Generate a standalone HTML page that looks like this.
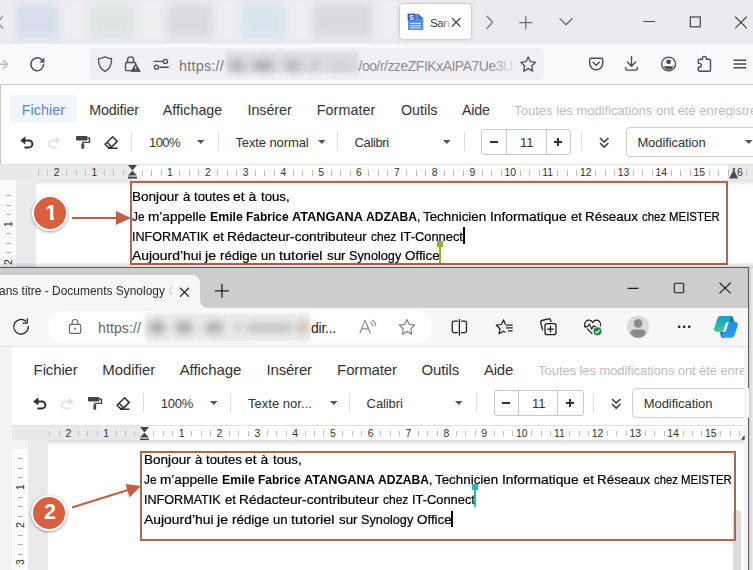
<!DOCTYPE html>
<html lang="fr"><head><meta charset="utf-8"><title>Documents Synology Office</title>
<style>
html,body{margin:0;padding:0}
body{width:753px;height:570px;overflow:hidden;position:relative;background:#fff;font-family:'Liberation Sans',sans-serif;}
svg{overflow:visible}
</style></head><body>
<div style="position:absolute;left:0px;top:0px;width:753px;height:44px;background:#eaeaef;"></div>
<div style="position:absolute;left:0px;top:0px;width:400px;height:42px;background:#eeeef1;filter:blur(4px);"></div>
<div style="position:absolute;left:15px;top:4px;width:44px;height:34px;background:#d5deea;filter:blur(4px);"></div>
<div style="position:absolute;left:90px;top:4px;width:44px;height:34px;background:#dde5e3;filter:blur(4px);"></div>
<div style="position:absolute;left:167px;top:4px;width:46px;height:34px;background:#dbdbdf;filter:blur(4px);"></div>
<div style="position:absolute;left:241px;top:4px;width:44px;height:34px;background:#d8e4ec;filter:blur(4px);"></div>
<div style="position:absolute;left:313px;top:4px;width:60px;height:34px;background:#dadade;filter:blur(4px);"></div>
<div style="position:absolute;left:396px;top:0px;width:357px;height:44px;background:#eaeaef;"></div>
<div style="position:absolute;left:400px;top:4px;width:71px;height:35px;background:#fff;border-radius:4px;box-shadow:0 0 3px rgba(0,0,0,.3);"></div>
<div style="position:absolute;left:430.00px;top:16.98px;font-size:11.6px;line-height:1;color:#333;white-space:pre;letter-spacing:-0.447px;">San</div>
<div style="position:absolute;left:440px;top:14px;width:10px;height:18px;background:linear-gradient(90deg,rgba(255,255,255,0),rgba(255,255,255,.75));"></div>
<div style="position:absolute;left:0px;top:44px;width:753px;height:40px;background:#f9f9fb;"></div>
<div style="position:absolute;left:0px;top:84px;width:753px;height:1px;background:#c9c9ce;"></div>
<div style="position:absolute;left:90px;top:48px;width:454px;height:32px;background:#f0f0f4;border-radius:4px;"></div>
<div style="position:absolute;left:179.00px;top:58.50px;font-size:14.3px;line-height:1;color:#747478;white-space:pre;letter-spacing:0.260px;">https://</div>
<div style="position:absolute;left:226px;top:51px;width:133px;height:22px;background:#e2e2e5;filter:blur(1.5px);"></div>
<div style="position:absolute;left:229px;top:59.5px;width:16px;height:11px;background:#adadb0;filter:blur(4px);border-radius:5px;"></div>
<div style="position:absolute;left:252px;top:59.5px;width:22px;height:11px;background:#acacaf;filter:blur(4px);border-radius:5px;"></div>
<div style="position:absolute;left:284px;top:59.5px;width:18px;height:11px;background:#b6b6b9;filter:blur(4px);border-radius:5px;"></div>
<div style="position:absolute;left:308px;top:59.5px;width:14px;height:11px;background:#c8c8cb;filter:blur(4px);border-radius:5px;"></div>
<div style="position:absolute;left:326px;top:59.5px;width:30px;height:11px;background:#d2d2d5;filter:blur(4px);border-radius:5px;"></div>
<div style="position:absolute;left:358.60px;top:58.75px;font-size:14px;line-height:1;color:#8e8e92;white-space:pre;letter-spacing:-0.499px;">/oo/r/zzeZFIKxAIPA7Ue3U</div>
<div style="position:absolute;left:490px;top:52px;width:28px;height:24px;background:linear-gradient(90deg,rgba(240,240,244,0),#f0f0f4);"></div>
<div style="position:absolute;left:0px;top:85px;width:753px;height:190px;background:#fff;"></div>
<div style="position:absolute;left:0px;top:85px;width:1px;height:80px;background:#c6c6c6;"></div>
<div style="position:absolute;left:10px;top:95px;width:66.5px;height:27.5px;background:#f2f5fa;border-radius:3px;"></div>
<div style="position:absolute;left:21.70px;top:102.60px;font-size:14.3px;line-height:1;color:#5a86c5;white-space:pre;letter-spacing:0.056px;">Fichier</div>
<div style="position:absolute;left:89.30px;top:102.60px;font-size:14.3px;line-height:1;color:#333;white-space:pre;letter-spacing:-0.170px;">Modifier</div>
<div style="position:absolute;left:162.80px;top:102.60px;font-size:14.3px;line-height:1;color:#333;white-space:pre;letter-spacing:0.016px;">Affichage</div>
<div style="position:absolute;left:247.50px;top:102.60px;font-size:14.3px;line-height:1;color:#333;white-space:pre;letter-spacing:-0.043px;">Insérer</div>
<div style="position:absolute;left:316.70px;top:102.60px;font-size:14.3px;line-height:1;color:#333;white-space:pre;letter-spacing:0.100px;">Formater</div>
<div style="position:absolute;left:401.00px;top:102.60px;font-size:14.3px;line-height:1;color:#333;white-space:pre;letter-spacing:-0.008px;">Outils</div>
<div style="position:absolute;left:462.00px;top:102.60px;font-size:14.3px;line-height:1;color:#333;white-space:pre;letter-spacing:-0.206px;">Aide</div>
<div style="position:absolute;left:514.20px;top:103.70px;font-size:13px;line-height:1;color:#bdbdbd;white-space:pre;letter-spacing:0.005px;width:239px;overflow:hidden;">Toutes les modifications ont été enregistrées</div>
<div style="position:absolute;left:130.5px;top:131.7px;width:1px;height:19.30000000000001px;background:#dcdcdc;"></div>
<div style="position:absolute;left:218.0px;top:131.7px;width:1px;height:19.30000000000001px;background:#dcdcdc;"></div>
<div style="position:absolute;left:336.5px;top:131.7px;width:1px;height:19.30000000000001px;background:#dcdcdc;"></div>
<div style="position:absolute;left:464.0px;top:131.7px;width:1px;height:19.30000000000001px;background:#dcdcdc;"></div>
<div style="position:absolute;left:580.9px;top:131.7px;width:1px;height:19.30000000000001px;background:#dcdcdc;"></div>
<div style="position:absolute;left:481.4px;top:129px;width:87.60000000000002px;height:24.400000000000006px;background:#fff;border:1px solid #c8c8c8;border-radius:3px;"></div>
<div style="position:absolute;left:506px;top:129px;width:1px;height:25.400000000000006px;background:#c8c8c8;"></div>
<div style="position:absolute;left:545.8px;top:129px;width:1px;height:25.400000000000006px;background:#c8c8c8;"></div>
<div style="position:absolute;left:489.8px;top:141.0px;width:8.199999999999989px;height:1.5px;background:#333;"></div>
<div style="position:absolute;left:554px;top:141.0px;width:7.7000000000000455px;height:1.5px;background:#333;"></div>
<div style="position:absolute;left:557.1px;top:137.89999999999998px;width:1.5px;height:7.7000000000000455px;background:#333;"></div>
<div style="position:absolute;left:626px;top:127.4px;width:140px;height:28px;background:#fff;border:1px solid #cfcfcf;border-radius:4px;"></div>
<svg style="position:absolute;left:197px;top:140px;" width="7.6" height="4" viewBox="0 0 7.6 4"><path d="M0 0h7.6L3.8 4z" fill="#555"/></svg>
<svg style="position:absolute;left:318px;top:140px;" width="7.6" height="4" viewBox="0 0 7.6 4"><path d="M0 0h7.6L3.8 4z" fill="#555"/></svg>
<svg style="position:absolute;left:443px;top:140px;" width="7.6" height="4" viewBox="0 0 7.6 4"><path d="M0 0h7.6L3.8 4z" fill="#555"/></svg>
<svg style="position:absolute;left:745px;top:140px;" width="7.6" height="4" viewBox="0 0 7.6 4"><path d="M0 0h7.6L3.8 4z" fill="#555"/></svg>
<div style="position:absolute;left:149.00px;top:136.00px;font-size:13px;line-height:1;color:#333;white-space:pre;letter-spacing:-0.562px;">100%</div>
<div style="position:absolute;left:235.40px;top:136.00px;font-size:13px;line-height:1;color:#333;white-space:pre;letter-spacing:-0.102px;">Texte normal</div>
<div style="position:absolute;left:354.50px;top:136.00px;font-size:13px;line-height:1;color:#333;white-space:pre;letter-spacing:-0.363px;">Calibri</div>
<div style="position:absolute;left:520.00px;top:136.00px;font-size:13px;line-height:1;color:#333;white-space:pre;letter-spacing:0.000px;">11</div>
<div style="position:absolute;left:637.40px;top:136.00px;font-size:13px;line-height:1;color:#333;white-space:pre;letter-spacing:-0.098px;">Modification</div>
<svg style="position:absolute;left:20px;top:135.5px;" width="14" height="13" viewBox="0 0 14 13"><path d="M0.2 4.4L5.4 0.2v8.400z" fill="#333"/><path d="M4.800 4.400h4.100a3.500 3.500 0 0 1 0 7H4.400" fill="none" stroke="#333" stroke-width="2"/></svg>
<svg style="position:absolute;left:47px;top:135.5px;" width="14" height="13" viewBox="0 0 14 13"><path d="M13.800 4.400L8.600 0.200v8.400z" fill="#e3e3e3"/><path d="M9.200 4.400H5.100a3.500 3.500 0 0 0 0 7h4.500" fill="none" stroke="#e3e3e3" stroke-width="2"/></svg>
<svg style="position:absolute;left:76px;top:135.5px;" width="14" height="13" viewBox="0 0 14 13"><rect x="0" y="0" width="11.5" height="4.6" rx="1" fill="#444"/><path d="M11.5 2.2h2v4.2H6.8v2" fill="none" stroke="#444" stroke-width="1.4"/><rect x="5.4" y="7.6" width="2.8" height="5.2" rx=".8" fill="#444"/></svg>
<svg style="position:absolute;left:104px;top:135.5px;" width="14" height="13" viewBox="0 0 14 13"><path d="M8.6 0.8l4.6 4.6-6 6H4.4L1 8.2z" fill="none" stroke="#333" stroke-width="1.5" stroke-linejoin="round"/><path d="M3.2 6.2l4.6 4.8M4 12.2h9.6" fill="none" stroke="#333" stroke-width="1.5"/></svg>
<svg style="position:absolute;left:598.8px;top:136.7px;" width="10.4" height="11.5" viewBox="0 0 10.4 11.5"><path d="M1 1l4.2 4 4.2-4M1 6l4.2 4 4.2-4" fill="none" stroke="#444" stroke-width="1.7"/></svg>
<div style="position:absolute;left:0px;top:164px;width:753px;height:15.5px;background:#e9e9e9;"></div>
<div style="position:absolute;left:132.2px;top:164px;width:596.3px;height:15.5px;background:#fff;"></div>
<div style="position:absolute;left:0px;top:164px;width:753px;height:1px;background:#e0e0e0;"></div>
<div style="position:absolute;left:38px;top:170.35000000000002px;width:1px;height:5.6px;background:#bdbdbd;"></div>
<div style="position:absolute;left:47px;top:170.35000000000002px;width:1px;height:5.6px;background:#bdbdbd;"></div>
<div style="position:absolute;left:53.70px;top:168.25px;font-size:10.4px;line-height:1;color:#333;white-space:pre;letter-spacing:0.000px;">2</div>
<div style="position:absolute;left:66px;top:170.35000000000002px;width:1px;height:5.6px;background:#bdbdbd;"></div>
<div style="position:absolute;left:76px;top:170.35000000000002px;width:1px;height:5.6px;background:#bdbdbd;"></div>
<div style="position:absolute;left:85px;top:170.35000000000002px;width:1px;height:5.6px;background:#bdbdbd;"></div>
<div style="position:absolute;left:91.50px;top:168.25px;font-size:10.4px;line-height:1;color:#333;white-space:pre;letter-spacing:0.000px;">1</div>
<div style="position:absolute;left:104px;top:170.35000000000002px;width:1px;height:5.6px;background:#bdbdbd;"></div>
<div style="position:absolute;left:113px;top:170.35000000000002px;width:1px;height:5.6px;background:#bdbdbd;"></div>
<div style="position:absolute;left:123px;top:170.35000000000002px;width:1px;height:5.6px;background:#bdbdbd;"></div>
<div style="position:absolute;left:142px;top:170.35000000000002px;width:1px;height:5.6px;background:#bdbdbd;"></div>
<div style="position:absolute;left:151px;top:170.35000000000002px;width:1px;height:5.6px;background:#bdbdbd;"></div>
<div style="position:absolute;left:161px;top:170.35000000000002px;width:1px;height:5.6px;background:#bdbdbd;"></div>
<div style="position:absolute;left:167.10px;top:168.25px;font-size:10.4px;line-height:1;color:#333;white-space:pre;letter-spacing:0.000px;">1</div>
<div style="position:absolute;left:179px;top:170.35000000000002px;width:1px;height:5.6px;background:#bdbdbd;"></div>
<div style="position:absolute;left:189px;top:170.35000000000002px;width:1px;height:5.6px;background:#bdbdbd;"></div>
<div style="position:absolute;left:198px;top:170.35000000000002px;width:1px;height:5.6px;background:#bdbdbd;"></div>
<div style="position:absolute;left:204.90px;top:168.25px;font-size:10.4px;line-height:1;color:#333;white-space:pre;letter-spacing:0.000px;">2</div>
<div style="position:absolute;left:217px;top:170.35000000000002px;width:1px;height:5.6px;background:#bdbdbd;"></div>
<div style="position:absolute;left:227px;top:170.35000000000002px;width:1px;height:5.6px;background:#bdbdbd;"></div>
<div style="position:absolute;left:236px;top:170.35000000000002px;width:1px;height:5.6px;background:#bdbdbd;"></div>
<div style="position:absolute;left:242.70px;top:168.25px;font-size:10.4px;line-height:1;color:#333;white-space:pre;letter-spacing:0.000px;">3</div>
<div style="position:absolute;left:255px;top:170.35000000000002px;width:1px;height:5.6px;background:#bdbdbd;"></div>
<div style="position:absolute;left:264px;top:170.35000000000002px;width:1px;height:5.6px;background:#bdbdbd;"></div>
<div style="position:absolute;left:274px;top:170.35000000000002px;width:1px;height:5.6px;background:#bdbdbd;"></div>
<div style="position:absolute;left:280.50px;top:168.25px;font-size:10.4px;line-height:1;color:#333;white-space:pre;letter-spacing:0.000px;">4</div>
<div style="position:absolute;left:293px;top:170.35000000000002px;width:1px;height:5.6px;background:#bdbdbd;"></div>
<div style="position:absolute;left:302px;top:170.35000000000002px;width:1px;height:5.6px;background:#bdbdbd;"></div>
<div style="position:absolute;left:312px;top:170.35000000000002px;width:1px;height:5.6px;background:#bdbdbd;"></div>
<div style="position:absolute;left:318.30px;top:168.25px;font-size:10.4px;line-height:1;color:#333;white-space:pre;letter-spacing:0.000px;">5</div>
<div style="position:absolute;left:331px;top:170.35000000000002px;width:1px;height:5.6px;background:#bdbdbd;"></div>
<div style="position:absolute;left:340px;top:170.35000000000002px;width:1px;height:5.6px;background:#bdbdbd;"></div>
<div style="position:absolute;left:350px;top:170.35000000000002px;width:1px;height:5.6px;background:#bdbdbd;"></div>
<div style="position:absolute;left:356.10px;top:168.25px;font-size:10.4px;line-height:1;color:#333;white-space:pre;letter-spacing:0.000px;">6</div>
<div style="position:absolute;left:368px;top:170.35000000000002px;width:1px;height:5.6px;background:#bdbdbd;"></div>
<div style="position:absolute;left:378px;top:170.35000000000002px;width:1px;height:5.6px;background:#bdbdbd;"></div>
<div style="position:absolute;left:387px;top:170.35000000000002px;width:1px;height:5.6px;background:#bdbdbd;"></div>
<div style="position:absolute;left:393.90px;top:168.25px;font-size:10.4px;line-height:1;color:#333;white-space:pre;letter-spacing:0.000px;">7</div>
<div style="position:absolute;left:406px;top:170.35000000000002px;width:1px;height:5.6px;background:#bdbdbd;"></div>
<div style="position:absolute;left:416px;top:170.35000000000002px;width:1px;height:5.6px;background:#bdbdbd;"></div>
<div style="position:absolute;left:425px;top:170.35000000000002px;width:1px;height:5.6px;background:#bdbdbd;"></div>
<div style="position:absolute;left:431.70px;top:168.25px;font-size:10.4px;line-height:1;color:#333;white-space:pre;letter-spacing:0.000px;">8</div>
<div style="position:absolute;left:444px;top:170.35000000000002px;width:1px;height:5.6px;background:#bdbdbd;"></div>
<div style="position:absolute;left:453px;top:170.35000000000002px;width:1px;height:5.6px;background:#bdbdbd;"></div>
<div style="position:absolute;left:463px;top:170.35000000000002px;width:1px;height:5.6px;background:#bdbdbd;"></div>
<div style="position:absolute;left:469.50px;top:168.25px;font-size:10.4px;line-height:1;color:#333;white-space:pre;letter-spacing:0.000px;">9</div>
<div style="position:absolute;left:482px;top:170.35000000000002px;width:1px;height:5.6px;background:#bdbdbd;"></div>
<div style="position:absolute;left:491px;top:170.35000000000002px;width:1px;height:5.6px;background:#bdbdbd;"></div>
<div style="position:absolute;left:501px;top:170.35000000000002px;width:1px;height:5.6px;background:#bdbdbd;"></div>
<div style="position:absolute;left:504.40px;top:168.25px;font-size:10.4px;line-height:1;color:#333;white-space:pre;letter-spacing:0.000px;">10</div>
<div style="position:absolute;left:520px;top:170.35000000000002px;width:1px;height:5.6px;background:#bdbdbd;"></div>
<div style="position:absolute;left:529px;top:170.35000000000002px;width:1px;height:5.6px;background:#bdbdbd;"></div>
<div style="position:absolute;left:539px;top:170.35000000000002px;width:1px;height:5.6px;background:#bdbdbd;"></div>
<div style="position:absolute;left:542.20px;top:168.25px;font-size:10.4px;line-height:1;color:#333;white-space:pre;letter-spacing:0.000px;">11</div>
<div style="position:absolute;left:557px;top:170.35000000000002px;width:1px;height:5.6px;background:#bdbdbd;"></div>
<div style="position:absolute;left:567px;top:170.35000000000002px;width:1px;height:5.6px;background:#bdbdbd;"></div>
<div style="position:absolute;left:576px;top:170.35000000000002px;width:1px;height:5.6px;background:#bdbdbd;"></div>
<div style="position:absolute;left:580.00px;top:168.25px;font-size:10.4px;line-height:1;color:#333;white-space:pre;letter-spacing:0.000px;">12</div>
<div style="position:absolute;left:595px;top:170.35000000000002px;width:1px;height:5.6px;background:#bdbdbd;"></div>
<div style="position:absolute;left:605px;top:170.35000000000002px;width:1px;height:5.6px;background:#bdbdbd;"></div>
<div style="position:absolute;left:614px;top:170.35000000000002px;width:1px;height:5.6px;background:#bdbdbd;"></div>
<div style="position:absolute;left:617.80px;top:168.25px;font-size:10.4px;line-height:1;color:#333;white-space:pre;letter-spacing:0.000px;">13</div>
<div style="position:absolute;left:633px;top:170.35000000000002px;width:1px;height:5.6px;background:#bdbdbd;"></div>
<div style="position:absolute;left:642px;top:170.35000000000002px;width:1px;height:5.6px;background:#bdbdbd;"></div>
<div style="position:absolute;left:652px;top:170.35000000000002px;width:1px;height:5.6px;background:#bdbdbd;"></div>
<div style="position:absolute;left:655.60px;top:168.25px;font-size:10.4px;line-height:1;color:#333;white-space:pre;letter-spacing:0.000px;">14</div>
<div style="position:absolute;left:671px;top:170.35000000000002px;width:1px;height:5.6px;background:#bdbdbd;"></div>
<div style="position:absolute;left:680px;top:170.35000000000002px;width:1px;height:5.6px;background:#bdbdbd;"></div>
<div style="position:absolute;left:690px;top:170.35000000000002px;width:1px;height:5.6px;background:#bdbdbd;"></div>
<div style="position:absolute;left:693.40px;top:168.25px;font-size:10.4px;line-height:1;color:#333;white-space:pre;letter-spacing:0.000px;">15</div>
<div style="position:absolute;left:709px;top:170.35000000000002px;width:1px;height:5.6px;background:#bdbdbd;"></div>
<div style="position:absolute;left:718px;top:170.35000000000002px;width:1px;height:5.6px;background:#bdbdbd;"></div>
<div style="position:absolute;left:728px;top:170.35000000000002px;width:1px;height:5.6px;background:#bdbdbd;"></div>
<div style="position:absolute;left:731.20px;top:168.25px;font-size:10.4px;line-height:1;color:#333;white-space:pre;letter-spacing:0.000px;">16</div>
<div style="position:absolute;left:746px;top:170.35000000000002px;width:1px;height:5.6px;background:#bdbdbd;"></div>
<svg style="position:absolute;left:128.1px;top:165.2px;" width="9" height="14" viewBox="0 0 9 14"><path d="M0 0h9L4.5 5.6z" fill="#444"/><path d="M4.5 5.8l4.5 4.6H0z" fill="#444"/><rect x="0" y="11.6" width="9" height="2" fill="#444"/></svg>
<svg style="position:absolute;left:729px;top:170.4px;" width="9.2" height="8.6" viewBox="0 0 9.2 8.6"><path d="M4.6 0l4.6 8.6H0z" fill="#4a4a4a"/></svg>
<div style="position:absolute;left:0px;top:179.5px;width:16px;height:95px;background:#fbfbfb;"></div>
<div style="position:absolute;left:16px;top:179.5px;width:19.5px;height:95px;background:#eaeaed;"></div>
<div style="position:absolute;left:35.5px;top:179.5px;width:720px;height:95px;background:#fff;"></div>
<div style="position:absolute;left:35.5px;top:179.5px;width:720px;height:6px;background:linear-gradient(#e0e0e0,#fff);"></div>
<div style="position:absolute;left:6px;top:195px;width:5px;height:1px;background:#b2b2b2;"></div>
<div style="position:absolute;left:6px;top:204.5px;width:5px;height:1px;background:#b2b2b2;"></div>
<div style="position:absolute;left:6px;top:214px;width:5px;height:1px;background:#b2b2b2;"></div>
<div style="position:absolute;left:6px;top:233px;width:5px;height:1px;background:#b2b2b2;"></div>
<div style="position:absolute;left:6px;top:242.5px;width:5px;height:1px;background:#b2b2b2;"></div>
<div style="position:absolute;left:6px;top:252px;width:5px;height:1px;background:#b2b2b2;"></div>
<div style="position:absolute;left:3.6px;top:226.6px;font-size:10.4px;line-height:1;color:#2a2a2a;transform:rotate(-90deg);transform-origin:0 0;">1</div>
<div style="position:absolute;left:3.6px;top:264.7px;font-size:10.4px;line-height:1;color:#2a2a2a;transform:rotate(-90deg);transform-origin:0 0;">2</div>
<div style="position:absolute;left:132.40px;top:190.31px;font-size:13.1px;line-height:1;color:#000;white-space:pre;letter-spacing:0.000px;transform:scaleX(1.0352);transform-origin:0 0;-webkit-text-stroke:0.22px #000;">Bonjour </div>
<div style="position:absolute;left:182.90px;top:190.31px;font-size:13.1px;line-height:1;color:#000;white-space:pre;letter-spacing:0.000px;transform:scaleX(1.0053);transform-origin:0 0;-webkit-text-stroke:0.22px #000;">à toutes </div>
<div style="position:absolute;left:233.40px;top:190.31px;font-size:13.1px;line-height:1;color:#000;white-space:pre;letter-spacing:0.000px;transform:scaleX(1.0634);transform-origin:0 0;-webkit-text-stroke:0.22px #000;">et à </div>
<div style="position:absolute;left:260.50px;top:190.31px;font-size:13.1px;line-height:1;color:#000;white-space:pre;letter-spacing:0.000px;transform:scaleX(1.0074);transform-origin:0 0;-webkit-text-stroke:0.22px #000;">tous,</div>
<div style="position:absolute;left:131.80px;top:210.11px;font-size:13.1px;line-height:1;color:#000;white-space:pre;letter-spacing:0.000px;transform:scaleX(0.9045);transform-origin:0 0;-webkit-text-stroke:0.22px #000;">Je </div>
<div style="position:absolute;left:147.60px;top:210.11px;font-size:13.1px;line-height:1;color:#000;white-space:pre;letter-spacing:0.000px;transform:scaleX(1.0371);transform-origin:0 0;-webkit-text-stroke:0.22px #000;">m’appelle </div>
<div style="position:absolute;left:209.50px;top:210.11px;font-size:13.1px;line-height:1;color:#000;white-space:pre;letter-spacing:0.000px;transform:scaleX(0.9409);transform-origin:0 0;font-weight:700;">Emile </div>
<div style="position:absolute;left:245.80px;top:210.11px;font-size:13.1px;line-height:1;color:#000;white-space:pre;letter-spacing:0.000px;transform:scaleX(0.9160);transform-origin:0 0;font-weight:700;">Fabrice </div>
<div style="position:absolute;left:291.80px;top:210.11px;font-size:13.1px;line-height:1;color:#000;white-space:pre;letter-spacing:0.000px;transform:scaleX(0.9706);transform-origin:0 0;font-weight:700;">ATANGANA </div>
<div style="position:absolute;left:365.70px;top:210.11px;font-size:13.1px;line-height:1;color:#000;white-space:pre;letter-spacing:0.000px;transform:scaleX(0.9207);transform-origin:0 0;font-weight:700;">ADZABA</div>
<div style="position:absolute;left:416.60px;top:210.11px;font-size:13.1px;line-height:1;color:#000;white-space:pre;letter-spacing:0.000px;transform:scaleX(0.9339);transform-origin:0 0;-webkit-text-stroke:0.22px #000;">, </div>
<div style="position:absolute;left:423.40px;top:210.11px;font-size:13.1px;line-height:1;color:#000;white-space:pre;letter-spacing:0.000px;transform:scaleX(1.0211);transform-origin:0 0;-webkit-text-stroke:0.22px #000;">Technicien </div>
<div style="position:absolute;left:490.30px;top:210.11px;font-size:13.1px;line-height:1;color:#000;white-space:pre;letter-spacing:0.000px;transform:scaleX(1.0534);transform-origin:0 0;-webkit-text-stroke:0.22px #000;">Informatique </div>
<div style="position:absolute;left:570.80px;top:210.11px;font-size:13.1px;line-height:1;color:#000;white-space:pre;letter-spacing:0.000px;transform:scaleX(1.0026);transform-origin:0 0;-webkit-text-stroke:0.22px #000;">et </div>
<div style="position:absolute;left:585.40px;top:210.11px;font-size:13.1px;line-height:1;color:#000;white-space:pre;letter-spacing:0.000px;transform:scaleX(1.0248);transform-origin:0 0;-webkit-text-stroke:0.22px #000;">Réseaux </div>
<div style="position:absolute;left:642.10px;top:210.11px;font-size:13.1px;line-height:1;color:#000;white-space:pre;letter-spacing:0.000px;transform:scaleX(0.8627);transform-origin:0 0;-webkit-text-stroke:0.22px #000;">chez </div>
<div style="position:absolute;left:669.10px;top:210.11px;font-size:13.1px;line-height:1;color:#000;white-space:pre;letter-spacing:0.000px;transform:scaleX(0.8728);transform-origin:0 0;-webkit-text-stroke:0.22px #000;">MEISTER</div>
<div style="position:absolute;left:132.40px;top:229.61px;font-size:13.1px;line-height:1;color:#000;white-space:pre;letter-spacing:0.000px;transform:scaleX(0.9614);transform-origin:0 0;-webkit-text-stroke:0.22px #000;">INFORMATIK </div>
<div style="position:absolute;left:212.60px;top:229.61px;font-size:13.1px;line-height:1;color:#000;white-space:pre;letter-spacing:0.000px;transform:scaleX(1.0094);transform-origin:0 0;-webkit-text-stroke:0.22px #000;">et </div>
<div style="position:absolute;left:227.30px;top:229.61px;font-size:13.1px;line-height:1;color:#000;white-space:pre;letter-spacing:0.000px;transform:scaleX(1.0446);transform-origin:0 0;-webkit-text-stroke:0.22px #000;">Rédacteur-contributeur </div>
<div style="position:absolute;left:371.00px;top:229.61px;font-size:13.1px;line-height:1;color:#000;white-space:pre;letter-spacing:0.000px;transform:scaleX(0.9170);transform-origin:0 0;-webkit-text-stroke:0.22px #000;">chez </div>
<div style="position:absolute;left:399.70px;top:229.61px;font-size:13.1px;line-height:1;color:#000;white-space:pre;letter-spacing:0.000px;transform:scaleX(0.9821);transform-origin:0 0;-webkit-text-stroke:0.22px #000;">IT-Connect</div>
<div style="position:absolute;left:131.80px;top:249.21px;font-size:13.1px;line-height:1;color:#000;white-space:pre;letter-spacing:0.000px;transform:scaleX(1.0614);transform-origin:0 0;-webkit-text-stroke:0.22px #000;">Aujourd’hui </div>
<div style="position:absolute;left:205.20px;top:249.21px;font-size:13.1px;line-height:1;color:#000;white-space:pre;letter-spacing:0.000px;transform:scaleX(1.0763);transform-origin:0 0;-webkit-text-stroke:0.22px #000;">je </div>
<div style="position:absolute;left:220.10px;top:249.21px;font-size:13.1px;line-height:1;color:#000;white-space:pre;letter-spacing:0.000px;transform:scaleX(1.0213);transform-origin:0 0;-webkit-text-stroke:0.22px #000;">rédige </div>
<div style="position:absolute;left:261.00px;top:249.21px;font-size:13.1px;line-height:1;color:#000;white-space:pre;letter-spacing:0.000px;transform:scaleX(0.9888);transform-origin:0 0;-webkit-text-stroke:0.22px #000;">un </div>
<div style="position:absolute;left:279.00px;top:249.21px;font-size:13.1px;line-height:1;color:#000;white-space:pre;letter-spacing:0.000px;transform:scaleX(1.1082);transform-origin:0 0;-webkit-text-stroke:0.22px #000;">tutoriel </div>
<div style="position:absolute;left:326.60px;top:249.21px;font-size:13.1px;line-height:1;color:#000;white-space:pre;letter-spacing:0.000px;transform:scaleX(1.0125);transform-origin:0 0;-webkit-text-stroke:0.22px #000;">sur </div>
<div style="position:absolute;left:348.70px;top:249.21px;font-size:13.1px;line-height:1;color:#000;white-space:pre;letter-spacing:0.000px;transform:scaleX(0.9702);transform-origin:0 0;-webkit-text-stroke:0.22px #000;">Synology </div>
<div style="position:absolute;left:404.50px;top:249.21px;font-size:13.1px;line-height:1;color:#000;white-space:pre;letter-spacing:0.000px;transform:scaleX(1.0215);transform-origin:0 0;-webkit-text-stroke:0.22px #000;">Office</div>
<div style="position:absolute;left:463px;top:227px;width:2px;height:16.5px;background:#000;"></div>
<div style="position:absolute;left:439.1px;top:243px;width:2.1px;height:20px;background:#8fb52f;"></div>
<div style="position:absolute;left:437.1px;top:241px;width:6px;height:5.8px;background:#8fb52f;"></div>
<div style="position:absolute;left:130px;top:181px;width:594px;height:80px;background:transparent;border:2px solid #b5654c;"></div>
<div style="position:absolute;left:72px;top:217.2px;width:46px;height:1.8px;background:#c25e43;"></div>
<svg style="position:absolute;left:116px;top:211px;" width="15" height="14" viewBox="0 0 15 14"><path d="M0 0l15 7L0 14z" fill="#c25e43"/></svg>
<div style="position:absolute;left:32.2px;top:194.7px;width:32px;height:32px;border-radius:50%;background:#d9603e;border:2px solid #fff;box-shadow:0 1px 3px rgba(0,0,0,.4);"></div>
<div style="position:absolute;left:45.30px;top:202.50px;font-size:21.5px;line-height:1;color:#fff;white-space:pre;letter-spacing:0.000px;font-weight:700;">1</div>
<div style="position:absolute;left:45.8px;top:217.39999999999998px;width:4.15px;height:4.2px;background:#d9603e;"></div>
<div style="position:absolute;left:54.05px;top:217.39999999999998px;width:3.6px;height:4.2px;background:#d9603e;"></div>
<div style="position:absolute;left:0px;top:262px;width:753px;height:6px;background:linear-gradient(rgba(0,0,0,0),rgba(0,0,0,.2));"></div>
<div style="position:absolute;left:0px;top:267px;width:749px;height:1px;background:#5a5a5a;"></div>
<div style="position:absolute;left:0px;top:268px;width:749px;height:40px;background:#cdcdcd;"></div>
<div style="position:absolute;left:0px;top:275px;width:200px;height:34px;background:#f7f7f7;border-radius:0 8px 0 0;"></div>
<svg style="position:absolute;left:200px;top:300px;" width="8" height="8" viewBox="0 0 8 8"><path d="M0 8V0a8 8 0 0 0 8 8z" fill="#f7f7f7"/></svg>
<div style="position:absolute;left:0px;top:308px;width:750px;height:38px;background:#f7f7f7;"></div>
<div style="position:absolute;left:0px;top:346px;width:750px;height:1px;background:#e3e3e3;"></div>
<div style="position:absolute;left:48px;top:311px;width:384px;height:32px;background:#fff;border-radius:16px;"></div>
<div style="position:absolute;left:-0.60px;top:284.20px;font-size:13px;line-height:1;color:#2a2a2a;white-space:pre;letter-spacing:0.000px;transform:scaleX(0.9184);transform-origin:0 0;">ans titre - Documents Synology</div>
<div style="position:absolute;left:168.50px;top:284.20px;font-size:13px;line-height:1;color:#d5d5d5;white-space:pre;letter-spacing:0.000px;width:4.5px;overflow:hidden;">O</div>
<div style="position:absolute;left:98.00px;top:320.65px;font-size:14px;line-height:1;color:#666;white-space:pre;letter-spacing:0.121px;">https://</div>
<div style="position:absolute;left:144.5px;top:313px;width:165px;height:29px;background:#ececec;filter:blur(1.5px);"></div>
<div style="position:absolute;left:149px;top:322.0px;width:16px;height:11px;background:#9c9c9c;filter:blur(4px);border-radius:5px;"></div>
<div style="position:absolute;left:175px;top:322.0px;width:18px;height:11px;background:#a6a6a6;filter:blur(4px);border-radius:5px;"></div>
<div style="position:absolute;left:205px;top:322.0px;width:18px;height:11px;background:#a8a8a8;filter:blur(4px);border-radius:5px;"></div>
<div style="position:absolute;left:233px;top:323.0px;width:9px;height:9px;background:#c4c4c4;filter:blur(4px);border-radius:5px;"></div>
<div style="position:absolute;left:246px;top:324.0px;width:48px;height:7px;background:#b4b4b4;filter:blur(4px);border-radius:5px;"></div>
<div style="position:absolute;left:299px;top:322.0px;width:8px;height:11px;background:#c7a089;filter:blur(4px);border-radius:5px;"></div>
<div style="position:absolute;left:311.00px;top:320.65px;font-size:14px;line-height:1;color:#222;white-space:pre;letter-spacing:-0.245px;">dir...</div>
<div style="position:absolute;left:0px;top:347px;width:750px;height:223px;background:#f3f3f3;"></div>
<div style="position:absolute;left:12px;top:347px;width:732px;height:223px;background:#fff;border-radius:0 7px 0 0;"></div>
<div style="position:absolute;left:748px;top:267px;width:1px;height:303px;background:#5a5a5a;"></div>
<div style="position:absolute;left:33.60px;top:362.00px;font-size:15px;line-height:1;color:#333;white-space:pre;letter-spacing:-0.131px;">Fichier</div>
<div style="position:absolute;left:102.20px;top:362.00px;font-size:15px;line-height:1;color:#333;white-space:pre;letter-spacing:-0.045px;">Modifier</div>
<div style="position:absolute;left:179.70px;top:362.00px;font-size:15px;line-height:1;color:#333;white-space:pre;letter-spacing:-0.087px;">Affichage</div>
<div style="position:absolute;left:266.50px;top:362.00px;font-size:15px;line-height:1;color:#333;white-space:pre;letter-spacing:-0.184px;">Insérer</div>
<div style="position:absolute;left:337.10px;top:362.00px;font-size:15px;line-height:1;color:#333;white-space:pre;letter-spacing:-0.130px;">Formater</div>
<div style="position:absolute;left:421.60px;top:362.00px;font-size:15px;line-height:1;color:#333;white-space:pre;letter-spacing:-0.157px;">Outils</div>
<div style="position:absolute;left:484.00px;top:362.00px;font-size:15px;line-height:1;color:#333;white-space:pre;letter-spacing:-0.258px;">Aide</div>
<div style="position:absolute;left:538.20px;top:363.70px;font-size:13px;line-height:1;color:#bdbdbd;white-space:pre;letter-spacing:-0.083px;width:205.6px;overflow:hidden;">Toutes les modifications ont été enregistrées</div>
<div style="position:absolute;left:142.8px;top:393px;width:1px;height:19px;background:#dcdcdc;"></div>
<div style="position:absolute;left:229.9px;top:393px;width:1px;height:19px;background:#dcdcdc;"></div>
<div style="position:absolute;left:349.0px;top:393px;width:1px;height:19px;background:#dcdcdc;"></div>
<div style="position:absolute;left:476.1px;top:393px;width:1px;height:19px;background:#dcdcdc;"></div>
<div style="position:absolute;left:592.8px;top:393px;width:1px;height:19px;background:#dcdcdc;"></div>
<div style="position:absolute;left:493.5px;top:390.4px;width:88.20000000000005px;height:23.700000000000045px;background:#fff;border:1px solid #c8c8c8;border-radius:3px;"></div>
<div style="position:absolute;left:518.3px;top:390.4px;width:1px;height:24.700000000000045px;background:#c8c8c8;"></div>
<div style="position:absolute;left:557.4px;top:390.4px;width:1px;height:24.700000000000045px;background:#c8c8c8;"></div>
<div style="position:absolute;left:501.9px;top:402.05px;width:8.100000000000023px;height:1.5px;background:#333;"></div>
<div style="position:absolute;left:566px;top:402.05px;width:8.399999999999977px;height:1.5px;background:#333;"></div>
<div style="position:absolute;left:569.45px;top:398.6px;width:1.5px;height:8.399999999999977px;background:#333;"></div>
<div style="position:absolute;left:632.4px;top:388.4px;width:140px;height:28px;background:#fff;border:1px solid #cfcfcf;border-radius:4px;"></div>
<svg style="position:absolute;left:209.7px;top:400.5px;" width="7.6" height="4" viewBox="0 0 7.6 4"><path d="M0 0h7.6L3.8 4z" fill="#555"/></svg>
<svg style="position:absolute;left:330.3px;top:400.5px;" width="7.6" height="4" viewBox="0 0 7.6 4"><path d="M0 0h7.6L3.8 4z" fill="#555"/></svg>
<svg style="position:absolute;left:455.2px;top:400.5px;" width="7.6" height="4" viewBox="0 0 7.6 4"><path d="M0 0h7.6L3.8 4z" fill="#555"/></svg>
<div style="position:absolute;left:160.70px;top:397.00px;font-size:13px;line-height:1;color:#333;white-space:pre;letter-spacing:-0.237px;">100%</div>
<div style="position:absolute;left:248.00px;top:397.00px;font-size:13px;line-height:1;color:#333;white-space:pre;letter-spacing:0.026px;">Texte nor...</div>
<div style="position:absolute;left:366.60px;top:397.00px;font-size:13px;line-height:1;color:#333;white-space:pre;letter-spacing:-0.106px;">Calibri</div>
<div style="position:absolute;left:531.90px;top:397.00px;font-size:13px;line-height:1;color:#333;white-space:pre;letter-spacing:0.000px;">11</div>
<div style="position:absolute;left:643.70px;top:397.00px;font-size:13px;line-height:1;color:#333;white-space:pre;letter-spacing:-0.056px;">Modification</div>
<svg style="position:absolute;left:32.8px;top:397px;" width="14" height="13" viewBox="0 0 14 13"><path d="M0.2 4.4L5.4 0.2v8.400z" fill="#333"/><path d="M4.800 4.400h4.100a3.500 3.500 0 0 1 0 7H4.400" fill="none" stroke="#333" stroke-width="2"/></svg>
<svg style="position:absolute;left:60px;top:397px;" width="14" height="13" viewBox="0 0 14 13"><path d="M13.800 4.400L8.600 0.200v8.400z" fill="#e3e3e3"/><path d="M9.200 4.400H5.100a3.500 3.500 0 0 0 0 7h4.500" fill="none" stroke="#e3e3e3" stroke-width="2"/></svg>
<svg style="position:absolute;left:87.8px;top:397px;" width="14" height="13" viewBox="0 0 14 13"><rect x="0" y="0" width="11.5" height="4.6" rx="1" fill="#444"/><path d="M11.5 2.2h2v4.2H6.8v2" fill="none" stroke="#444" stroke-width="1.4"/><rect x="5.4" y="7.6" width="2.8" height="5.2" rx=".8" fill="#444"/></svg>
<svg style="position:absolute;left:116px;top:397px;" width="14" height="13" viewBox="0 0 14 13"><path d="M8.6 0.8l4.6 4.6-6 6H4.4L1 8.2z" fill="none" stroke="#333" stroke-width="1.5" stroke-linejoin="round"/><path d="M3.2 6.2l4.6 4.8M4 12.2h9.6" fill="none" stroke="#333" stroke-width="1.5"/></svg>
<svg style="position:absolute;left:611px;top:398px;" width="10.4" height="11.5" viewBox="0 0 10.4 11.5"><path d="M1 1l4.2 4 4.2-4M1 6l4.2 4 4.2-4" fill="none" stroke="#444" stroke-width="1.7"/></svg>
<div style="position:absolute;left:744px;top:347px;width:4px;height:223px;background:#f5f5f5;"></div>
<div style="position:absolute;left:749px;top:268px;width:4px;height:302px;background:linear-gradient(90deg,#cfcfcf,#efefef);"></div>
<div style="position:absolute;left:12px;top:424.5px;width:732px;height:15.300000000000011px;background:#e9e9e9;"></div>
<div style="position:absolute;left:143.9px;top:424.5px;width:600.1px;height:15.300000000000011px;background:#fff;"></div>
<div style="position:absolute;left:12px;top:424.5px;width:732px;height:1px;background:#e0e0e0;"></div>
<div style="position:absolute;left:49px;top:430.75px;width:1px;height:5.6px;background:#bdbdbd;"></div>
<div style="position:absolute;left:59px;top:430.75px;width:1px;height:5.6px;background:#bdbdbd;"></div>
<div style="position:absolute;left:65.40px;top:428.65px;font-size:10.4px;line-height:1;color:#333;white-space:pre;letter-spacing:0.000px;">2</div>
<div style="position:absolute;left:78px;top:430.75px;width:1px;height:5.6px;background:#bdbdbd;"></div>
<div style="position:absolute;left:87px;top:430.75px;width:1px;height:5.6px;background:#bdbdbd;"></div>
<div style="position:absolute;left:97px;top:430.75px;width:1px;height:5.6px;background:#bdbdbd;"></div>
<div style="position:absolute;left:103.20px;top:428.65px;font-size:10.4px;line-height:1;color:#333;white-space:pre;letter-spacing:0.000px;">1</div>
<div style="position:absolute;left:116px;top:430.75px;width:1px;height:5.6px;background:#bdbdbd;"></div>
<div style="position:absolute;left:125px;top:430.75px;width:1px;height:5.6px;background:#bdbdbd;"></div>
<div style="position:absolute;left:134px;top:430.75px;width:1px;height:5.6px;background:#bdbdbd;"></div>
<div style="position:absolute;left:153px;top:430.75px;width:1px;height:5.6px;background:#bdbdbd;"></div>
<div style="position:absolute;left:163px;top:430.75px;width:1px;height:5.6px;background:#bdbdbd;"></div>
<div style="position:absolute;left:172px;top:430.75px;width:1px;height:5.6px;background:#bdbdbd;"></div>
<div style="position:absolute;left:178.80px;top:428.65px;font-size:10.4px;line-height:1;color:#333;white-space:pre;letter-spacing:0.000px;">1</div>
<div style="position:absolute;left:191px;top:430.75px;width:1px;height:5.6px;background:#bdbdbd;"></div>
<div style="position:absolute;left:201px;top:430.75px;width:1px;height:5.6px;background:#bdbdbd;"></div>
<div style="position:absolute;left:210px;top:430.75px;width:1px;height:5.6px;background:#bdbdbd;"></div>
<div style="position:absolute;left:216.60px;top:428.65px;font-size:10.4px;line-height:1;color:#333;white-space:pre;letter-spacing:0.000px;">2</div>
<div style="position:absolute;left:229px;top:430.75px;width:1px;height:5.6px;background:#bdbdbd;"></div>
<div style="position:absolute;left:238px;top:430.75px;width:1px;height:5.6px;background:#bdbdbd;"></div>
<div style="position:absolute;left:248px;top:430.75px;width:1px;height:5.6px;background:#bdbdbd;"></div>
<div style="position:absolute;left:254.40px;top:428.65px;font-size:10.4px;line-height:1;color:#333;white-space:pre;letter-spacing:0.000px;">3</div>
<div style="position:absolute;left:267px;top:430.75px;width:1px;height:5.6px;background:#bdbdbd;"></div>
<div style="position:absolute;left:276px;top:430.75px;width:1px;height:5.6px;background:#bdbdbd;"></div>
<div style="position:absolute;left:286px;top:430.75px;width:1px;height:5.6px;background:#bdbdbd;"></div>
<div style="position:absolute;left:292.20px;top:428.65px;font-size:10.4px;line-height:1;color:#333;white-space:pre;letter-spacing:0.000px;">4</div>
<div style="position:absolute;left:305px;top:430.75px;width:1px;height:5.6px;background:#bdbdbd;"></div>
<div style="position:absolute;left:314px;top:430.75px;width:1px;height:5.6px;background:#bdbdbd;"></div>
<div style="position:absolute;left:323px;top:430.75px;width:1px;height:5.6px;background:#bdbdbd;"></div>
<div style="position:absolute;left:330.00px;top:428.65px;font-size:10.4px;line-height:1;color:#333;white-space:pre;letter-spacing:0.000px;">5</div>
<div style="position:absolute;left:342px;top:430.75px;width:1px;height:5.6px;background:#bdbdbd;"></div>
<div style="position:absolute;left:352px;top:430.75px;width:1px;height:5.6px;background:#bdbdbd;"></div>
<div style="position:absolute;left:361px;top:430.75px;width:1px;height:5.6px;background:#bdbdbd;"></div>
<div style="position:absolute;left:367.80px;top:428.65px;font-size:10.4px;line-height:1;color:#333;white-space:pre;letter-spacing:0.000px;">6</div>
<div style="position:absolute;left:380px;top:430.75px;width:1px;height:5.6px;background:#bdbdbd;"></div>
<div style="position:absolute;left:390px;top:430.75px;width:1px;height:5.6px;background:#bdbdbd;"></div>
<div style="position:absolute;left:399px;top:430.75px;width:1px;height:5.6px;background:#bdbdbd;"></div>
<div style="position:absolute;left:405.60px;top:428.65px;font-size:10.4px;line-height:1;color:#333;white-space:pre;letter-spacing:0.000px;">7</div>
<div style="position:absolute;left:418px;top:430.75px;width:1px;height:5.6px;background:#bdbdbd;"></div>
<div style="position:absolute;left:427px;top:430.75px;width:1px;height:5.6px;background:#bdbdbd;"></div>
<div style="position:absolute;left:437px;top:430.75px;width:1px;height:5.6px;background:#bdbdbd;"></div>
<div style="position:absolute;left:443.40px;top:428.65px;font-size:10.4px;line-height:1;color:#333;white-space:pre;letter-spacing:0.000px;">8</div>
<div style="position:absolute;left:456px;top:430.75px;width:1px;height:5.6px;background:#bdbdbd;"></div>
<div style="position:absolute;left:465px;top:430.75px;width:1px;height:5.6px;background:#bdbdbd;"></div>
<div style="position:absolute;left:475px;top:430.75px;width:1px;height:5.6px;background:#bdbdbd;"></div>
<div style="position:absolute;left:481.20px;top:428.65px;font-size:10.4px;line-height:1;color:#333;white-space:pre;letter-spacing:0.000px;">9</div>
<div style="position:absolute;left:494px;top:430.75px;width:1px;height:5.6px;background:#bdbdbd;"></div>
<div style="position:absolute;left:503px;top:430.75px;width:1px;height:5.6px;background:#bdbdbd;"></div>
<div style="position:absolute;left:512px;top:430.75px;width:1px;height:5.6px;background:#bdbdbd;"></div>
<div style="position:absolute;left:516.10px;top:428.65px;font-size:10.4px;line-height:1;color:#333;white-space:pre;letter-spacing:0.000px;">10</div>
<div style="position:absolute;left:531px;top:430.75px;width:1px;height:5.6px;background:#bdbdbd;"></div>
<div style="position:absolute;left:541px;top:430.75px;width:1px;height:5.6px;background:#bdbdbd;"></div>
<div style="position:absolute;left:550px;top:430.75px;width:1px;height:5.6px;background:#bdbdbd;"></div>
<div style="position:absolute;left:553.90px;top:428.65px;font-size:10.4px;line-height:1;color:#333;white-space:pre;letter-spacing:0.000px;">11</div>
<div style="position:absolute;left:569px;top:430.75px;width:1px;height:5.6px;background:#bdbdbd;"></div>
<div style="position:absolute;left:579px;top:430.75px;width:1px;height:5.6px;background:#bdbdbd;"></div>
<div style="position:absolute;left:588px;top:430.75px;width:1px;height:5.6px;background:#bdbdbd;"></div>
<div style="position:absolute;left:591.70px;top:428.65px;font-size:10.4px;line-height:1;color:#333;white-space:pre;letter-spacing:0.000px;">12</div>
<div style="position:absolute;left:607px;top:430.75px;width:1px;height:5.6px;background:#bdbdbd;"></div>
<div style="position:absolute;left:616px;top:430.75px;width:1px;height:5.6px;background:#bdbdbd;"></div>
<div style="position:absolute;left:626px;top:430.75px;width:1px;height:5.6px;background:#bdbdbd;"></div>
<div style="position:absolute;left:629.50px;top:428.65px;font-size:10.4px;line-height:1;color:#333;white-space:pre;letter-spacing:0.000px;">13</div>
<div style="position:absolute;left:645px;top:430.75px;width:1px;height:5.6px;background:#bdbdbd;"></div>
<div style="position:absolute;left:654px;top:430.75px;width:1px;height:5.6px;background:#bdbdbd;"></div>
<div style="position:absolute;left:664px;top:430.75px;width:1px;height:5.6px;background:#bdbdbd;"></div>
<div style="position:absolute;left:667.30px;top:428.65px;font-size:10.4px;line-height:1;color:#333;white-space:pre;letter-spacing:0.000px;">14</div>
<div style="position:absolute;left:683px;top:430.75px;width:1px;height:5.6px;background:#bdbdbd;"></div>
<div style="position:absolute;left:692px;top:430.75px;width:1px;height:5.6px;background:#bdbdbd;"></div>
<div style="position:absolute;left:701px;top:430.75px;width:1px;height:5.6px;background:#bdbdbd;"></div>
<div style="position:absolute;left:705.10px;top:428.65px;font-size:10.4px;line-height:1;color:#333;white-space:pre;letter-spacing:0.000px;">15</div>
<div style="position:absolute;left:720px;top:430.75px;width:1px;height:5.6px;background:#bdbdbd;"></div>
<div style="position:absolute;left:730px;top:430.75px;width:1px;height:5.6px;background:#bdbdbd;"></div>
<div style="position:absolute;left:739px;top:430.75px;width:1px;height:5.6px;background:#bdbdbd;"></div>
<svg style="position:absolute;left:139.6px;top:426.7px;" width="9" height="14" viewBox="0 0 9 14"><path d="M0 0h9L4.5 5.6z" fill="#444"/><path d="M4.5 5.8l4.5 4.6H0z" fill="#444"/><rect x="0" y="11.6" width="9" height="2" fill="#444"/></svg>
<svg style="position:absolute;left:740.6px;top:435.2px;" width="3.6" height="4.8" viewBox="0 0 3.6 4.8"><path d="M3.6 0v4.8H0z" fill="#444"/></svg>
<div style="position:absolute;left:12px;top:439.8px;width:16px;height:9px;background:#f3f3f3;"></div>
<div style="position:absolute;left:12px;top:448.8px;width:16px;height:130px;background:#fcfcfc;"></div>
<div style="position:absolute;left:28px;top:439.8px;width:19.8px;height:131px;background:#eaeaed;"></div>
<div style="position:absolute;left:47.5px;top:440.5px;width:696.5px;height:130px;background:#fff;"></div>
<div style="position:absolute;left:47.8px;top:439.8px;width:696.2px;height:7px;background:linear-gradient(#dedede,#fff);"></div>
<div style="position:absolute;left:18px;top:458px;width:5px;height:1px;background:#b2b2b2;"></div>
<div style="position:absolute;left:18px;top:467.5px;width:5px;height:1px;background:#b2b2b2;"></div>
<div style="position:absolute;left:18px;top:477px;width:5px;height:1px;background:#b2b2b2;"></div>
<div style="position:absolute;left:18px;top:496.5px;width:5px;height:1px;background:#b2b2b2;"></div>
<div style="position:absolute;left:18px;top:506px;width:5px;height:1px;background:#b2b2b2;"></div>
<div style="position:absolute;left:18px;top:515.5px;width:5px;height:1px;background:#b2b2b2;"></div>
<div style="position:absolute;left:18px;top:534.5px;width:5px;height:1px;background:#b2b2b2;"></div>
<div style="position:absolute;left:18px;top:544px;width:5px;height:1px;background:#b2b2b2;"></div>
<div style="position:absolute;left:18px;top:553.5px;width:5px;height:1px;background:#b2b2b2;"></div>
<div style="position:absolute;left:15.6px;top:489.8px;font-size:10.4px;line-height:1;color:#2a2a2a;transform:rotate(-90deg);transform-origin:0 0;">1</div>
<div style="position:absolute;left:15.6px;top:528.4px;font-size:10.4px;line-height:1;color:#2a2a2a;transform:rotate(-90deg);transform-origin:0 0;">2</div>
<div style="position:absolute;left:15.6px;top:565.3px;font-size:10.4px;line-height:1;color:#2a2a2a;transform:rotate(-90deg);transform-origin:0 0;">3</div>
<div style="position:absolute;left:732.7px;top:509.5px;width:8px;height:62px;background:#dcdcdc;border-radius:4px 4px 0 0;"></div>
<div style="position:absolute;left:144.40px;top:453.11px;font-size:13.1px;line-height:1;color:#000;white-space:pre;letter-spacing:0.000px;transform:scaleX(1.0352);transform-origin:0 0;-webkit-text-stroke:0.22px #000;">Bonjour </div>
<div style="position:absolute;left:194.90px;top:453.11px;font-size:13.1px;line-height:1;color:#000;white-space:pre;letter-spacing:0.000px;transform:scaleX(1.0053);transform-origin:0 0;-webkit-text-stroke:0.22px #000;">à toutes </div>
<div style="position:absolute;left:245.40px;top:453.11px;font-size:13.1px;line-height:1;color:#000;white-space:pre;letter-spacing:0.000px;transform:scaleX(1.0634);transform-origin:0 0;-webkit-text-stroke:0.22px #000;">et à </div>
<div style="position:absolute;left:272.50px;top:453.11px;font-size:13.1px;line-height:1;color:#000;white-space:pre;letter-spacing:0.000px;transform:scaleX(1.0074);transform-origin:0 0;-webkit-text-stroke:0.22px #000;">tous,</div>
<div style="position:absolute;left:143.80px;top:472.71px;font-size:13.1px;line-height:1;color:#000;white-space:pre;letter-spacing:0.000px;transform:scaleX(0.9045);transform-origin:0 0;-webkit-text-stroke:0.22px #000;">Je </div>
<div style="position:absolute;left:159.60px;top:472.71px;font-size:13.1px;line-height:1;color:#000;white-space:pre;letter-spacing:0.000px;transform:scaleX(1.0371);transform-origin:0 0;-webkit-text-stroke:0.22px #000;">m’appelle </div>
<div style="position:absolute;left:221.50px;top:472.71px;font-size:13.1px;line-height:1;color:#000;white-space:pre;letter-spacing:0.000px;transform:scaleX(0.9409);transform-origin:0 0;font-weight:700;">Emile </div>
<div style="position:absolute;left:257.80px;top:472.71px;font-size:13.1px;line-height:1;color:#000;white-space:pre;letter-spacing:0.000px;transform:scaleX(0.9160);transform-origin:0 0;font-weight:700;">Fabrice </div>
<div style="position:absolute;left:303.80px;top:472.71px;font-size:13.1px;line-height:1;color:#000;white-space:pre;letter-spacing:0.000px;transform:scaleX(0.9706);transform-origin:0 0;font-weight:700;">ATANGANA </div>
<div style="position:absolute;left:377.70px;top:472.71px;font-size:13.1px;line-height:1;color:#000;white-space:pre;letter-spacing:0.000px;transform:scaleX(0.9207);transform-origin:0 0;font-weight:700;">ADZABA</div>
<div style="position:absolute;left:428.60px;top:472.71px;font-size:13.1px;line-height:1;color:#000;white-space:pre;letter-spacing:0.000px;transform:scaleX(0.9339);transform-origin:0 0;-webkit-text-stroke:0.22px #000;">, </div>
<div style="position:absolute;left:435.40px;top:472.71px;font-size:13.1px;line-height:1;color:#000;white-space:pre;letter-spacing:0.000px;transform:scaleX(1.0211);transform-origin:0 0;-webkit-text-stroke:0.22px #000;">Technicien </div>
<div style="position:absolute;left:502.30px;top:472.71px;font-size:13.1px;line-height:1;color:#000;white-space:pre;letter-spacing:0.000px;transform:scaleX(1.0534);transform-origin:0 0;-webkit-text-stroke:0.22px #000;">Informatique </div>
<div style="position:absolute;left:582.80px;top:472.71px;font-size:13.1px;line-height:1;color:#000;white-space:pre;letter-spacing:0.000px;transform:scaleX(1.0026);transform-origin:0 0;-webkit-text-stroke:0.22px #000;">et </div>
<div style="position:absolute;left:597.40px;top:472.71px;font-size:13.1px;line-height:1;color:#000;white-space:pre;letter-spacing:0.000px;transform:scaleX(1.0248);transform-origin:0 0;-webkit-text-stroke:0.22px #000;">Réseaux </div>
<div style="position:absolute;left:654.10px;top:472.71px;font-size:13.1px;line-height:1;color:#000;white-space:pre;letter-spacing:0.000px;transform:scaleX(0.8627);transform-origin:0 0;-webkit-text-stroke:0.22px #000;">chez </div>
<div style="position:absolute;left:681.10px;top:472.71px;font-size:13.1px;line-height:1;color:#000;white-space:pre;letter-spacing:0.000px;transform:scaleX(0.8728);transform-origin:0 0;-webkit-text-stroke:0.22px #000;">MEISTER</div>
<div style="position:absolute;left:144.40px;top:492.91px;font-size:13.1px;line-height:1;color:#000;white-space:pre;letter-spacing:0.000px;transform:scaleX(0.9614);transform-origin:0 0;-webkit-text-stroke:0.22px #000;">INFORMATIK </div>
<div style="position:absolute;left:224.60px;top:492.91px;font-size:13.1px;line-height:1;color:#000;white-space:pre;letter-spacing:0.000px;transform:scaleX(1.0094);transform-origin:0 0;-webkit-text-stroke:0.22px #000;">et </div>
<div style="position:absolute;left:239.30px;top:492.91px;font-size:13.1px;line-height:1;color:#000;white-space:pre;letter-spacing:0.000px;transform:scaleX(1.0446);transform-origin:0 0;-webkit-text-stroke:0.22px #000;">Rédacteur-contributeur </div>
<div style="position:absolute;left:383.00px;top:492.91px;font-size:13.1px;line-height:1;color:#000;white-space:pre;letter-spacing:0.000px;transform:scaleX(0.9170);transform-origin:0 0;-webkit-text-stroke:0.22px #000;">chez </div>
<div style="position:absolute;left:411.70px;top:492.91px;font-size:13.1px;line-height:1;color:#000;white-space:pre;letter-spacing:0.000px;transform:scaleX(0.9821);transform-origin:0 0;-webkit-text-stroke:0.22px #000;">IT-Connect</div>
<div style="position:absolute;left:143.80px;top:512.81px;font-size:13.1px;line-height:1;color:#000;white-space:pre;letter-spacing:0.000px;transform:scaleX(1.0614);transform-origin:0 0;-webkit-text-stroke:0.22px #000;">Aujourd’hui </div>
<div style="position:absolute;left:217.20px;top:512.81px;font-size:13.1px;line-height:1;color:#000;white-space:pre;letter-spacing:0.000px;transform:scaleX(1.0763);transform-origin:0 0;-webkit-text-stroke:0.22px #000;">je </div>
<div style="position:absolute;left:232.10px;top:512.81px;font-size:13.1px;line-height:1;color:#000;white-space:pre;letter-spacing:0.000px;transform:scaleX(1.0213);transform-origin:0 0;-webkit-text-stroke:0.22px #000;">rédige </div>
<div style="position:absolute;left:273.00px;top:512.81px;font-size:13.1px;line-height:1;color:#000;white-space:pre;letter-spacing:0.000px;transform:scaleX(0.9888);transform-origin:0 0;-webkit-text-stroke:0.22px #000;">un </div>
<div style="position:absolute;left:291.00px;top:512.81px;font-size:13.1px;line-height:1;color:#000;white-space:pre;letter-spacing:0.000px;transform:scaleX(1.1082);transform-origin:0 0;-webkit-text-stroke:0.22px #000;">tutoriel </div>
<div style="position:absolute;left:338.60px;top:512.81px;font-size:13.1px;line-height:1;color:#000;white-space:pre;letter-spacing:0.000px;transform:scaleX(1.0125);transform-origin:0 0;-webkit-text-stroke:0.22px #000;">sur </div>
<div style="position:absolute;left:360.70px;top:512.81px;font-size:13.1px;line-height:1;color:#000;white-space:pre;letter-spacing:0.000px;transform:scaleX(0.9702);transform-origin:0 0;-webkit-text-stroke:0.22px #000;">Synology </div>
<div style="position:absolute;left:416.50px;top:512.81px;font-size:13.1px;line-height:1;color:#000;white-space:pre;letter-spacing:0.000px;transform:scaleX(1.0215);transform-origin:0 0;-webkit-text-stroke:0.22px #000;">Office</div>
<div style="position:absolute;left:451.2px;top:510.5px;width:2px;height:16px;background:#000;"></div>
<div style="position:absolute;left:474.2px;top:486px;width:2.2px;height:20.5px;background:#2bb5b5;"></div>
<div style="position:absolute;left:472.1px;top:484.3px;width:6px;height:5.7px;background:#2bb5b5;"></div>
<div style="position:absolute;left:140px;top:451px;width:592px;height:86px;background:transparent;border:2px solid #b5654c;"></div>
<svg style="position:absolute;left:0px;top:0px;pointer-events:none;" width="753" height="570" viewBox="0 0 753 570"><path d="M72 507.5L128 490" stroke="#c25e43" stroke-width="2.1" fill="none"/><path d="M141 486l-15.5-2 4 13.5z" fill="#c25e43"/></svg>
<div style="position:absolute;left:31.200000000000003px;top:495.1px;width:32px;height:32px;border-radius:50%;background:#d9603e;border:2px solid #fff;box-shadow:0 1px 3px rgba(0,0,0,.4);"></div>
<div style="position:absolute;left:43.95px;top:502.40px;font-size:21.5px;line-height:1;color:#fff;white-space:pre;letter-spacing:0.000px;font-weight:700;">2</div>
<svg style="position:absolute;left:0px;top:0px;" width="753" height="100" viewBox="0 0 753 100"><path d="M0 64.3h7.2M3.4 60.2l4 4.1-4 4.1" fill="none" stroke="#b9b9bd" stroke-width="1.4" stroke-linecap="round" stroke-linejoin="round" /><path d="M43.6 64.2a6.4 6.4 0 1 1-2.2-4.8" fill="none" stroke="#4b4b50" stroke-width="1.5" stroke-linecap="round" stroke-linejoin="round" /><path d="M44.4 57.4v5.2h-5.2z" fill="#4b4b50"/><path d="M105 56.7c2.6 1.5 4.6 1.9 6.6 2 0 6.6-2 10.4-6.6 12.6-4.600-2.200-6.600-6-6.600-12.600 2-.1 4-.5 6.600-2z" fill="none" stroke="#4b4b50" stroke-width="1.3" stroke-linecap="round" stroke-linejoin="round" /><path d="M127.500 62.300v-2.300a3.100 3.100 0 0 1 6.200 0v2.300" fill="none" stroke="#4b4b50" stroke-width="1.4" stroke-linecap="round" stroke-linejoin="round" /><path d="M131 70.600h-4.200a1.300 1.300 0 0 1-1.300-1.300v-5.500a1.300 1.300 0 0 1 1.300-1.300h7.600a1.300 1.300 0 0 1 1.300 1.300v.6" fill="none" stroke="#4b4b50" stroke-width="1.4" stroke-linecap="round" stroke-linejoin="round" /><path d="M135.700 63.800l4.700 7.700h-9.400z" fill="#4b4b50" stroke="#4b4b50" stroke-width=".8" stroke-linejoin="round"/><path d="M135.700 66.300v2.600M135.700 70v.2" stroke="#f0f0f4" stroke-width="1.100" fill="none"/><path d="M154 61.400h8.200" fill="none" stroke="#4b4b50" stroke-width="1.4" stroke-linecap="round" stroke-linejoin="round" /><circle cx="165.400" cy="61.400" r="2.100" fill="none" stroke="#4b4b50" stroke-width="1.300"/><path d="M160 67.300h8.200" fill="none" stroke="#4b4b50" stroke-width="1.4" stroke-linecap="round" stroke-linejoin="round" /><circle cx="156.500" cy="67.300" r="2.100" fill="none" stroke="#4b4b50" stroke-width="1.300"/><path d="M528.2 57l2.200 4.700 5.100.7-3.700 3.600.9 5.100-4.500-2.500-4.500 2.500.9-5.100-3.700-3.600 5.100-.7z" fill="none" stroke="#4b4b50" stroke-width="1.3" stroke-linecap="round" stroke-linejoin="round" /><path d="M591.200 58.200h10a1.500 1.500 0 0 1 1.500 1.500v3.600a6.500 6.500 0 0 1-13 0v-3.600a1.500 1.500 0 0 1 1.500-1.500z" fill="none" stroke="#4b4b50" stroke-width="1.4" stroke-linecap="round" stroke-linejoin="round" /><path d="M593 62.300l3.200 3 3.200-3" fill="none" stroke="#4b4b50" stroke-width="1.4" stroke-linecap="round" stroke-linejoin="round" /><path d="M631.500 56.600v9.400M627.300 62l4.200 4.200 4.200-4.200" fill="none" stroke="#4b4b50" stroke-width="1.4" stroke-linecap="round" stroke-linejoin="round" /><path d="M625.700 67.500v1.300a1.300 1.300 0 0 0 1.300 1.300h9a1.300 1.300 0 0 0 1.300-1.300v-1.300" fill="none" stroke="#4b4b50" stroke-width="1.4" stroke-linecap="round" stroke-linejoin="round" /><circle cx="668.600" cy="64" r="6.900" fill="none" stroke="#4b4b50" stroke-width="1.400"/><circle cx="668.600" cy="61.800" r="2.400" fill="#4b4b50"/><path d="M663.900 66.200h9.400a4.900 4.900 0 0 1-9.400 0z" fill="#4b4b50"/><path d="M702.500 59.200v-.9a1.900 1.900 0 0 1 3.800 0v.9h2.900a1.300 1.300 0 0 1 1.300 1.300v9.400a1.300 1.300 0 0 1-1.300 1.300h-9.600a1.300 1.300 0 0 1-1.300-1.300v-2.700h1.100a1.900 1.900 0 0 0 0-3.800h-1.100v-2.900a1.300 1.300 0 0 1 1.300-1.300z" fill="none" stroke="#4b4b50" stroke-width="1.4" stroke-linecap="round" stroke-linejoin="round" /><path d="M734 60.200h11.800M734 64h11.800M734 67.800h11.800" fill="none" stroke="#4b4b50" stroke-width="1.4" stroke-linecap="round" stroke-linejoin="round" /><path d="M408 14h10.500l4.800 4.800v11.200h-15.300z" fill="#5b8fdf"/><path d="M418.500 14l4.800 4.800h-4.800z" fill="#3d6ec4"/><rect x="407.600" y="13.600" width="7.600" height="7" fill="#2f62bd"/><path d="M410.200 23.500h10.600M410.200 25.700h10.600M410.200 27.900h10.600" stroke="#dfeaff" stroke-width="1" fill="none"/><path d="M452.300 18.400l7.600 7.800M459.900 18.400l-7.600 7.800" fill="none" stroke="#333" stroke-width="1.2" stroke-linecap="round" stroke-linejoin="round" /><path d="M487 16.200l5.600 6-5.600 6" fill="none" stroke="#7a7a7e" stroke-width="1.3" stroke-linecap="round" stroke-linejoin="round" /><path d="M519.600 22.600h12.400M525.800 16.600v12.200" fill="none" stroke="#6a6a6e" stroke-width="1.2" stroke-linecap="round" stroke-linejoin="round" /><path d="M560 18.800l6 6 6-6" fill="none" stroke="#6a6a6e" stroke-width="1.3" stroke-linecap="round" stroke-linejoin="round" /><path d="M2.600 16.200l-4.800 6 4.800 6" fill="none" stroke="#8a8a8e" stroke-width="1.3" stroke-linecap="round" stroke-linejoin="round" /><path d="M643.800 21.500h10.800" fill="none" stroke="#444" stroke-width="1.2" stroke-linecap="round" stroke-linejoin="round" /><rect x="690.300" y="17" width="10" height="9.800" fill="none" stroke="#444" stroke-width="1.200"/><path d="M735.500 17l11 10.800M746.500 17l-11 10.800" fill="none" stroke="#444" stroke-width="1.1" stroke-linecap="round" stroke-linejoin="round" /></svg>
<div style="position:absolute;left:409.20px;top:14.27px;font-size:7px;line-height:1;color:#fff;white-space:pre;letter-spacing:0.000px;font-weight:700;">S</div>
<svg style="position:absolute;left:0px;top:0px;" width="753" height="400" viewBox="0 0 753 400"><path d="M28.300 326.700a7.300 7.300 0 1 1-2.500-5.500" fill="none" stroke="#1f1f1f" stroke-width="1.25" stroke-linecap="round" stroke-linejoin="round" /><path d="M27.300 318.700v4.300h-4.300" fill="none" stroke="#1f1f1f" stroke-width="1.25" stroke-linecap="round" stroke-linejoin="round" /><rect x="69.400" y="324.300" width="11.300" height="9" rx="1.600" fill="none" stroke="#6a6a6a" stroke-width="1.150"/><path d="M72.100 324.200v-1.800a2.950 2.950 0 0 1 5.900 0v1.800" fill="none" stroke="#6a6a6a" stroke-width="1.15" stroke-linecap="round" stroke-linejoin="round" /><circle cx="75.050" cy="328.800" r="1" fill="#6a6a6a"/><path d="M180.400 288.200l8.200 8.200M188.600 288.200l-8.200 8.200" fill="none" stroke="#1f1f1f" stroke-width="1.25" stroke-linecap="round" stroke-linejoin="round" /><path d="M215.400 290.800h13M221.900 284.300v13" fill="none" stroke="#1f1f1f" stroke-width="1.25" stroke-linecap="round" stroke-linejoin="round" /><path d="M360 333l4.800-12.400h.6L370.200 333M361.800 328.800h6.600" fill="none" stroke="#8a8a8a" stroke-width="1.2" stroke-linecap="round" stroke-linejoin="round" /><path d="M370.600 322.600a4 4 0 0 1 2.300 3.300M372.300 320.300a6.600 6.600 0 0 1 3.500 5.300" fill="none" stroke="#8a8a8a" stroke-width="1.1" stroke-linecap="round" stroke-linejoin="round" /><path d="M407 319.600l2.350 4.800 5.250.750-3.800 3.700.9 5.250-4.700-2.500-4.700 2.500.9-5.250-3.800-3.700 5.250-.750z" fill="none" stroke="#808080" stroke-width="1.2" stroke-linecap="round" stroke-linejoin="round" /><path d="M457.400 321h-3.300a1.800 1.800 0 0 0-1.800 1.800v8.100a1.800 1.800 0 0 0 1.800 1.800h3.300M461.400 321h3.300a1.800 1.800 0 0 1 1.800 1.800v8.100a1.800 1.800 0 0 1-1.800 1.800h-3.300M459.400 319.400v15.600" fill="none" stroke="#1f1f1f" stroke-width="1.25" stroke-linecap="round" stroke-linejoin="round" /><path d="M505.500 324.300L503.500 319.900l-2.200 4.600-5 .7 3.700 3.500-.9 5.100 4.400-2.500 1.600.9M506.600 325h5.700M506.600 327.900h5.700M508.300 330.800h4" fill="none" stroke="#1f1f1f" stroke-width="1.25" stroke-linecap="round" stroke-linejoin="round" /><path d="M542.600 329.800l-1.900-7.200a1.700 1.700 0 0 1 1.200-2.100l6.600-1.700a1.700 1.700 0 0 1 2.100 1.200l.4 1.600" fill="none" stroke="#1f1f1f" stroke-width="1.3" stroke-linecap="round" stroke-linejoin="round" /><rect x="545" y="323.600" width="11" height="11" rx="2.200" fill="#f7f7f7" stroke="#1f1f1f" stroke-width="1.300"/><path d="M547.600 329.100h5.800M550.500 326.200v5.800" fill="none" stroke="#1f1f1f" stroke-width="1.3" stroke-linecap="round" stroke-linejoin="round" /><path d="M592.700 322.500c-1.500-2.700-5-3-6.700-1.200-1.700 1.800-1.600 4.200-.4 5.900M592.700 322.500c1.500-2.700 5-3 6.700-1.200 1.300 1.400 1.500 3.200 1 4.700M587.500 329l4.500 4.600" fill="none" stroke="#1f1f1f" stroke-width="1.2" stroke-linecap="round" stroke-linejoin="round" /><path d="M584.500 326.600h3.200l1.700-2.800 2.300 5.400 1.700-3.400 1 .8h1.600" fill="none" stroke="#1f1f1f" stroke-width="1.1" stroke-linecap="round" stroke-linejoin="round" /><circle cx="597.500" cy="331.300" r="4.500" fill="#1a8a3a" stroke="#f7f7f7" stroke-width=".8"/><path d="M595.300 331.400l1.600 1.600 2.900-3" fill="none" stroke="#fff" stroke-width="1.200"/><circle cx="638.100" cy="327" r="11.300" fill="#dadada"/><circle cx="638.100" cy="323.400" r="4.300" fill="#8b8b8b"/><path d="M630.400 333.200c0-2.400 1.800-3.600 3.600-3.600h8.200c1.800 0 3.600 1.200 3.600 3.600-1.600 2.900-4.400 4.500-7.700 4.500s-6.100-1.600-7.700-4.500z" fill="#8b8b8b"/><circle cx="679.200" cy="326.700" r="1.250" fill="#111"/><circle cx="684.200" cy="326.700" r="1.250" fill="#111"/><circle cx="689.200" cy="326.700" r="1.250" fill="#111"/><path d="M628 288.400h10" fill="none" stroke="#1f1f1f" stroke-width="1.1" stroke-linecap="round" stroke-linejoin="round" /><rect x="674.300" y="283.300" width="9.400" height="9.400" rx="1.400" fill="none" stroke="#1f1f1f" stroke-width="1.100"/><path d="M719.800 283l10.600 10.200M730.400 283l-10.600 10.200" fill="none" stroke="#1f1f1f" stroke-width="1.1" stroke-linecap="round" stroke-linejoin="round" /><defs><linearGradient id="cp1" x1="0" y1="0" x2="0" y2="1"><stop offset="0" stop-color="#19a0cc"/><stop offset=".55" stop-color="#1fb4b4"/><stop offset="1" stop-color="#35d38c"/></linearGradient>
<linearGradient id="cp2" x1="0" y1="0" x2="0" y2="1"><stop offset="0" stop-color="#2a86ea"/><stop offset="1" stop-color="#1ea6f5"/></linearGradient></defs>
<path d="M726.500 316h4.200c1.300 0 2 .6 2.400 1.800l1.400 4.300h-5.500z" fill="#0f7ea8"/>
<path d="M720.200 331.800h5.800l-1.200 5.900h-1.500c-1.300 0-2.200-.6-2.600-1.800z" fill="#1b55c4"/>
<path d="M720.600 316h8.400c1.200 0 1.800.9 1.500 2l-3.800 11.700c-.5 1.400-1.500 2.100-2.900 2.100h-7.200c-1.900 0-2.900-1.600-2.400-3.300l3.200-10.200c.5-1.500 1.700-2.300 3.200-2.300z" fill="url(#cp1)"/>
<path d="M731.300 337.800h-8.400c-1.200 0-1.800-.9-1.500-2l3.800-11.700c.5-1.400 1.500-2.100 2.900-2.100h7.200c1.900 0 2.900 1.600 2.400 3.300l-3.200 10.200c-.5 1.500-1.700 2.300-3.200 2.300z" fill="url(#cp2)"/>
<path d="M725.600 323.400c.4-1 1.200-1.500 2.300-1.500h.9l-2.500 7.900c-.4 1.200-1.200 1.900-2.400 2h-.9z" fill="#fff"/></svg>
</body></html>
